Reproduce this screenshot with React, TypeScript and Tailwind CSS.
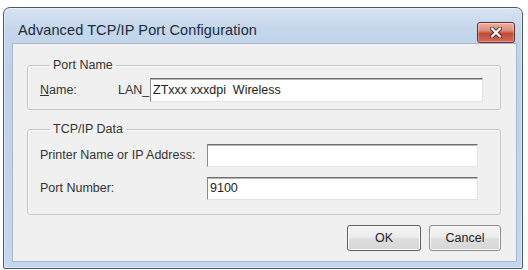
import React from "react";

export default function App() {
  const font = { fontFamily: '"Liberation Sans", Arial, sans-serif' };
  const input =
    "flex-1 bg-white border border-t-[#6f6f6f] border-l-[#8a8a8a] border-r-[#e3e3e3] border-b-[#e3e3e3] shadow-[inset_0_1px_0_#b5b5b5]";
  return (
    <div className="w-[528px] h-[270px] bg-white pt-[7px] pl-[3px] overflow-hidden" style={font}>
      <div className="w-[520px] h-[262px] border border-[#4d5968] rounded-t-[7px] rounded-b-[2px] flex flex-col bg-[linear-gradient(180deg,#d6e3f2_0px,#c5d7eb_20px,#bdd2ea_60px,#c3d8ee_100%)] shadow-[inset_0_0_0_1px_rgba(255,255,255,0.45)]">
        {/* title bar */}
        <div className="h-[35px] flex items-center justify-between pl-[14px] pr-[7px]">
          <span className="text-[14.5px] text-[#1c2b3c] tracking-[0.1px] mt-[10px]">Advanced TCP/IP Port Configuration</span>
          <div className="w-[38px] h-[21px] mt-[13px] rounded-[3px] border border-[#6b2c25] flex items-center justify-center bg-[linear-gradient(180deg,#eab1a4_0%,#d88d7c_40%,#c24a36_55%,#cf6a55_100%)] shadow-[inset_0_0_0_1px_rgba(255,255,255,0.35)]">
            <svg width="12" height="11" viewBox="0 0 12 11">
              <path d="M2 1.5 L10 9.5 M10 1.5 L2 9.5" stroke="#5a2018" strokeWidth="4" strokeLinecap="round" />
              <path d="M2 1.5 L10 9.5 M10 1.5 L2 9.5" stroke="#ffffff" strokeWidth="2.4" strokeLinecap="round" />
            </svg>
          </div>
        </div>
        {/* client area + frame */}
        <div className="flex-1 flex pl-[8px] pr-[5px] pb-[6px]">
          <div className="flex-1 bg-[#f0f0f0] border border-[#a9b8c9] pt-[13px] pl-[14px] pr-[15px] flex flex-col text-[12.5px] text-[#222]">
            <fieldset className="border border-[#c6c9cc] rounded-[3px] pl-[12px] pr-[17px] pb-[7px] shadow-[inset_1px_1px_0_#fafafa]">
              <legend className="ml-[10px] px-[3px] leading-[16px] text-[#333]">Port Name</legend>
              <div className="flex items-center mt-[5px]">
                <span className="w-[78px] text-[#333]"><span className="underline">N</span>ame:</span>
                <span className="w-[32px] text-[#333]">LAN_</span>
                <div className={input + " h-[24px] flex items-center pl-[2px] text-[#222] whitespace-pre"}>ZTxxx xxxdpi  Wireless</div>
              </div>
            </fieldset>
            <fieldset className="border border-[#c6c9cc] rounded-[3px] pl-[12px] pr-[22px] pb-[14px] mt-[11px] shadow-[inset_1px_1px_0_#fafafa]">
              <legend className="ml-[10px] px-[3px] leading-[16px] text-[#333]">TCP/IP Data</legend>
              <div className="flex items-center mt-[7px]">
                <span className="w-[167px] text-[#333]">Printer Name or IP Address:</span>
                <div className={input + " h-[23px]"}></div>
              </div>
              <div className="flex items-center mt-[10px]">
                <span className="w-[167px] text-[#333]">Port Number:</span>
                <div className={input + " h-[23px] flex items-center pl-[2px] text-[#222]"}>9100</div>
              </div>
            </fieldset>
            <div className="flex justify-end gap-[8px] mt-[10px]">
              <button className="w-[74px] h-[26px] rounded-[3px] border border-[#5f5f5f] bg-[linear-gradient(180deg,#f4f4f4_0%,#ececec_45%,#dedede_55%,#d6d6d6_100%)] shadow-[inset_0_0_0_1px_#fbfbfb] text-[12.5px] text-[#222]">OK</button>
              <button className="w-[72px] h-[26px] rounded-[3px] border border-[#8e8e8e] bg-[linear-gradient(180deg,#f4f4f4_0%,#ececec_45%,#dedede_55%,#d6d6d6_100%)] shadow-[inset_0_0_0_1px_#fbfbfb] text-[12.5px] text-[#222]">Cancel</button>
            </div>
          </div>
        </div>
      </div>
    </div>
  );
}
